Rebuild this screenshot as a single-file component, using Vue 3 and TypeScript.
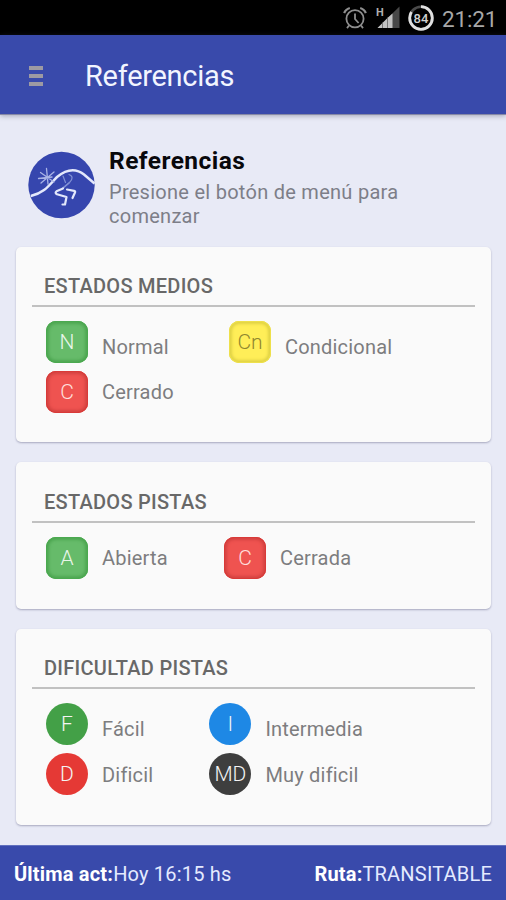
<script setup lang="ts">
interface Entry {
  code: string
  label: string
  tone: string
}
interface Group {
  id: string
  title: string
  round: boolean
  entries: Entry[]
}

const groups: Group[] = [
  {
    id: 'lifts',
    title: 'ESTADOS MEDIOS',
    round: false,
    entries: [
      { code: 'N', label: 'Normal', tone: 'open' },
      { code: 'Cn', label: 'Condicional', tone: 'partial' },
      { code: 'C', label: 'Cerrado', tone: 'closed' },
    ],
  },
  {
    id: 'slopes',
    title: 'ESTADOS PISTAS',
    round: false,
    entries: [
      { code: 'A', label: 'Abierta', tone: 'open' },
      { code: 'C', label: 'Cerrada', tone: 'closed' },
    ],
  },
  {
    id: 'levels',
    title: 'DIFICULTAD PISTAS',
    round: true,
    entries: [
      { code: 'F', label: 'Fácil', tone: 'easy' },
      { code: 'I', label: 'Intermedia', tone: 'medium' },
      { code: 'D', label: 'Dificil', tone: 'hard' },
      { code: 'MD', label: 'Muy dificil', tone: 'expert' },
    ],
  },
]
</script>

<template>
  <div class="screen">
    <div class="status">
      <svg class="alarm" viewBox="0 0 24 24" width="24" height="24">
        <g fill="none" stroke="#8e8e8e" stroke-width="1.8">
          <circle cx="12" cy="12.8" r="8.6" />
          <path d="M12 7.5V13l3.6 4" />
          <path d="M1.2 7.2Q2.5 3.2 6.8 2M22.8 7.2Q21.5 3.2 17.2 2" stroke-width="2.2" />
          <path d="M6 19.5l-2 2.6M18 19.5l2 2.6" />
        </g>
      </svg>
      <svg class="signal" viewBox="0 0 26 24" width="26" height="24">
        <path d="M24.500 .5v21.500H2.500z" fill="#484848" />
        <path d="M7 17.500v4.500H2.500zM12 12.500v9.500H8v-5.500zM17.500 7.500v14.500H13V11.500z" fill="#c2c2c2" />
        <path d="M7.500 16.500v5.500M12.500 11.500v10.500" stroke="#777" stroke-width="1" />
        <text x="1" y="9.500" class="net">H</text>
      </svg>
      <svg class="battery" viewBox="0 0 28 28" width="28" height="28">
        <circle cx="14" cy="14" r="11.300" fill="none" stroke="#4a4a4a" stroke-width="2.600" />
        <circle cx="14" cy="14" r="11.300" fill="none" stroke="#e0e0e0" stroke-width="2.800" pathLength="100" stroke-dasharray="84 16" transform="rotate(-90 14 14)" />
        <text x="14" y="18.600" text-anchor="middle" class="level">84</text>
      </svg>
      <span class="clock">21:21</span>
    </div>

    <header class="toolbar">
      <div class="menu"><i></i><i></i><i></i></div>
      <h1>Referencias</h1>
    </header>

    <main>
      <section class="intro">
        <svg class="logo" viewBox="0 0 68 68" width="68" height="68">
          <circle cx="34.500" cy="34" r="33.200" fill="#3646ae" />
          <g fill="none" stroke-linecap="round" stroke-linejoin="round">
            <path d="M3.800 45C18 42 23 33 30 26C41 17 50 18 57 23.500L67.500 32.500" stroke="#e3e8fb" stroke-width="2.500" stroke-linecap="butt" />
            <path d="M19.500 17.500L21 33M13.500 21.500L27 31M27 21L14 32M11.500 27.500L25 26" stroke="#a9b3e6" stroke-width="1.300" />
            <path d="M36 25L38.500 31.500M42 23.500C46 25 46 28 42.500 31.500L36 37" stroke="#8090d4" stroke-width="1.200" />
            <path d="M42 32L36 37" stroke="#8090d4" stroke-width="1.600" />
            <path d="M36 37.500L29.500 40.300Q27.500 41.800 30 43.300L39.500 46L38 53.500H35.500M40 38.500L47.200 39.800Q48.600 40.200 48 41.500L45.500 47" stroke="#e3e8fb" stroke-width="2.200" />
          </g>
        </svg>
        <div class="words">
          <h2>Referencias</h2>
          <p>Presione el botón de menú para comenzar</p>
        </div>
      </section>

      <section v-for="group in groups" :key="group.id" class="card" :class="group.id">
        <h3>{{ group.title }}</h3>
        <div class="grid">
          <div v-for="entry in group.entries" :key="entry.label" class="entry">
            <span class="badge" :class="[entry.tone, { round: group.round }]">{{ entry.code }}</span>
            <span class="label">{{ entry.label }}</span>
          </div>
        </div>
      </section>
    </main>

    <footer>
      <span class="updated"><b>Última act:</b>Hoy 16:15 hs</span>
      <span class="route"><b>Ruta:</b>TRANSITABLE</span>
    </footer>
  </div>
</template>

<style>
body {
  margin: 0;
  overflow: hidden;
}
</style>

<style scoped>
.screen {
  width: 506px;
  height: 900px;
  display: flex;
  flex-direction: column;
  background: #e8eaf6;
  font-family: Roboto, "Liberation Sans", sans-serif;
  color: #7d7d7f;
  white-space: nowrap;
}
h1, h2, h3, p {
  margin: 0;
}
.status {
  height: 35px;
  flex: none;
  display: flex;
  align-items: center;
  background: #000;
  padding-left: 343px;
}
.signal {
  margin-left: 8px;
}
.battery {
  margin-left: 6px;
}
.net {
  font-size: 11px;
  font-weight: 700;
  fill: #b0b0b0;
}
.level {
  font-size: 13px;
  font-weight: 500;
  fill: #d0d0d0;
}
.clock {
  margin-left: 7px;
  padding-top: 3px;
  font-size: 22.5px;
  line-height: 30px;
  color: #a8a8a8;
  letter-spacing: -.15px;
}
.toolbar {
  height: 80px;
  flex: none;
  display: flex;
  align-items: center;
  background: #394aab;
  border-bottom: 1px solid #8689a6;
  box-sizing: border-box;
  box-shadow: 0 1px 5px rgba(60, 65, 90, .4);
  z-index: 1;
}
.menu {
  display: grid;
  gap: 4px;
  margin: 3px 0 0 29px;
}
.menu i {
  width: 14px;
  height: 4.3px;
  background: #9d9aa3;
}
h1 {
  margin: 3px 0 0 42px;
  font-size: 29px;
  font-weight: 400;
  line-height: 34px;
  letter-spacing: -.28px;
  color: #f2f5ff;
}
main {
  flex: 1;
  padding: 0 15px 0 16px;
}
.intro {
  height: 132px;
  display: flex;
}
.logo {
  margin: 36px 0 0 11px;
}
.words {
  margin: 31px 0 0 14px;
  width: 320px;
}
h2 {
  font-size: 24.5px;
  line-height: 30px;
  font-weight: 700;
  letter-spacing: .45px;
  color: #08080c;
}
p {
  margin-top: 4px;
  font-size: 20px;
  line-height: 24px;
  letter-spacing: .27px;
  white-space: normal;
  color: #7d7e88;
}
.card {
  box-sizing: border-box;
  height: 195px;
  margin-bottom: 20px;
  padding: 25px 16px 0;
  background: #fafafa;
  border-radius: 5px;
  box-shadow: 0 1px 2px rgba(70, 70, 110, .4);
}
.card.slopes {
  height: 147px;
  padding-top: 26px;
}
.card.levels {
  height: 196px;
}
h3 {
  height: 33px;
  padding-left: 12px;
  font-size: 20px;
  line-height: 28px;
  font-weight: 500;
  letter-spacing: .27px;
  color: #686868;
  border-bottom: 2px solid #c1c1c1;
}
.grid {
  display: grid;
  grid-template-columns: 183px 1fr;
  row-gap: 8px;
  padding: 14px 0 0 14px;
}
.slopes .grid {
  grid-template-columns: 178px 1fr;
}
.levels .grid {
  grid-template-columns: 163.4px 1fr;
}
.entry {
  display: flex;
  align-items: center;
  height: 42px;
}
.badge {
  width: 42px;
  height: 42px;
  box-sizing: border-box;
  flex: none;
  border-radius: 10px;
  display: flex;
  align-items: center;
  justify-content: center;
  font-size: 21px;
  font-weight: 300;
  color: #e9f5e9;
}
.open {
  background: #66bb6a;
  box-shadow: inset 0 0 0 1px #4ba950, inset 0 0 3px 3px #4ea752;
}
.closed {
  background: #ef5350;
  box-shadow: inset 0 0 0 1px #d93a38, inset 0 0 3px 3px #d44341;
  color: #ffe0df;
}
.partial {
  background: #ffee58;
  box-shadow: inset 0 0 0 1px #eee04b, inset 0 0 3px 3px #e0d245;
  color: #8f862f;
}
.round {
  border-radius: 50%;
  color: #f4f4f4;
}
.easy {
  background: #43a047;
}
.medium {
  background: #1e88e5;
}
.hard {
  background: #e53935;
}
.expert {
  background: #3e3e3e;
}
.label {
  margin-left: 14px;
  font-size: 20px;
  line-height: 24px;
  letter-spacing: .2px;
}
.levels .label {
  padding-top: 2px;
}
.lifts .entry:nth-child(-n+2) .label,
.levels .entry:nth-child(-n+2) .label {
  padding-top: 9px;
}
footer {
  height: 56px;
  flex: none;
  box-sizing: border-box;
  padding: 0 14px;
  display: flex;
  align-items: center;
  justify-content: space-between;
  background: #394aab;
  border-top: 1px solid #6170be;
  color: #e4eaff;
  font-size: 20px;
  letter-spacing: .19px;
}
footer b {
  color: #fff;
}
</style>
